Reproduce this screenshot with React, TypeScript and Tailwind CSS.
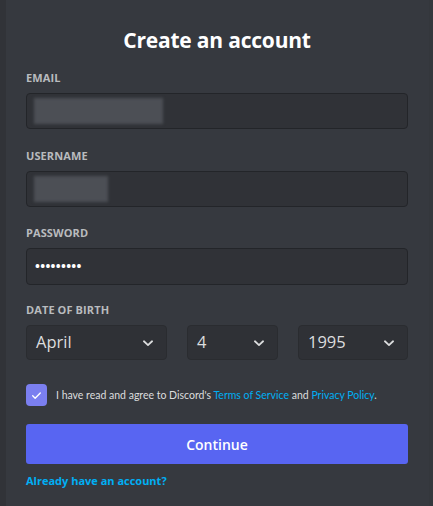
import React from "react";

function Chevron() {
  return (
    <svg width="14" height="14" viewBox="0 0 24 24" fill="none" stroke="#dcddde" strokeWidth="3" strokeLinecap="round" strokeLinejoin="round">
      <path d="M5 9l7 6.5 7-6.5" />
    </svg>
  );
}

function Label({ children }: { children: React.ReactNode }) {
  return (
    <div className="text-[11px] font-bold tracking-[0.1px] text-[#b9bbbe] leading-[12px] mb-[9px]">
      {children}
    </div>
  );
}

function Select({ value, className }: { value: string; className: string }) {
  return (
    <div className={`h-[35px] rounded-[4px] bg-[#2f3136] border border-[#2a2c30] flex items-center justify-between pl-[9px] pr-[11px] ${className}`}>
      <span className="text-[16.5px] text-[#dcddde]">{value}</span>
      <Chevron />
    </div>
  );
}

export default function App() {
  return (
    <div
      className="w-[433px] h-[506px] bg-[#36393f] pt-[26px] border-l-[6px] border-l-[#313338] border-r-[4px] border-r-[#34373c] pl-[20px] pr-[21px]"
      style={{ fontFamily: '"Open Sans", "Noto Sans", sans-serif' }}
    >
      <h1 className="text-center text-[21px] font-bold text-white leading-[28px] tracking-[-0.2px]">
        Create an account
      </h1>

      <div className="mt-[18px]">
        <Label>EMAIL</Label>
        <div className="h-[36px] rounded-[4px] bg-[#303237] border border-[#232529] flex items-center pl-[7px]">
          <div className="w-[129px] h-[26px] bg-[#4c4f55] blur-[1.5px]" />
        </div>
      </div>

      <div className="mt-[21px]">
        <Label>USERNAME</Label>
        <div className="h-[36px] rounded-[4px] bg-[#303237] border border-[#232529] flex items-center pl-[7px]">
          <div className="w-[74px] h-[26px] bg-[#4c4f55] blur-[1.5px]" />
        </div>
      </div>

      <div className="mt-[20px]">
        <Label>PASSWORD</Label>
        <div className="h-[37px] rounded-[4px] bg-[#303237] border border-[#232529] flex items-center pl-[8px]">
          <span className="text-[13px] tracking-[0.3px] text-white font-bold leading-none">•••••••••</span>
        </div>
      </div>

      <div className="mt-[19px]">
        <Label>DATE OF BIRTH</Label>
        <div className="flex gap-[20px]">
          <Select value="April" className="w-[141px]" />
          <Select value="4" className="w-[91px]" />
          <Select value="1995" className="w-[110px]" />
        </div>
      </div>

      <div className="mt-[24px] flex items-center gap-[9px]">
        <div className="w-[21px] h-[22px] rounded-[4px] bg-[#7b7ff0] flex items-center justify-center">
          <svg width="13" height="13" viewBox="0 0 24 24" fill="none" stroke="white" strokeWidth="2.5" strokeLinecap="round" strokeLinejoin="round">
            <path d="M5 12.5l4.5 4.5L19 7.5" />
          </svg>
        </div>
        <p className="text-[10.5px] text-[#dcddde] leading-[14px]" style={{ fontFamily: 'Lato, "Open Sans", sans-serif' }}>
          I have read and agree to Discord's{" "}
          <span className="text-[#00aff4]">Terms of Service</span> and{" "}
          <span className="text-[#00aff4]">Privacy Policy</span>.
        </p>
      </div>

      <button className="mt-[18px] w-full h-[40px] rounded-[3px] bg-[#5865f2] text-white text-[14px] font-semibold">
        Continue
      </button>

      <div className="mt-[9px] text-[11px] leading-[16px] font-bold text-[#00aff4]">
        Already have an account?
      </div>
    </div>
  );
}
